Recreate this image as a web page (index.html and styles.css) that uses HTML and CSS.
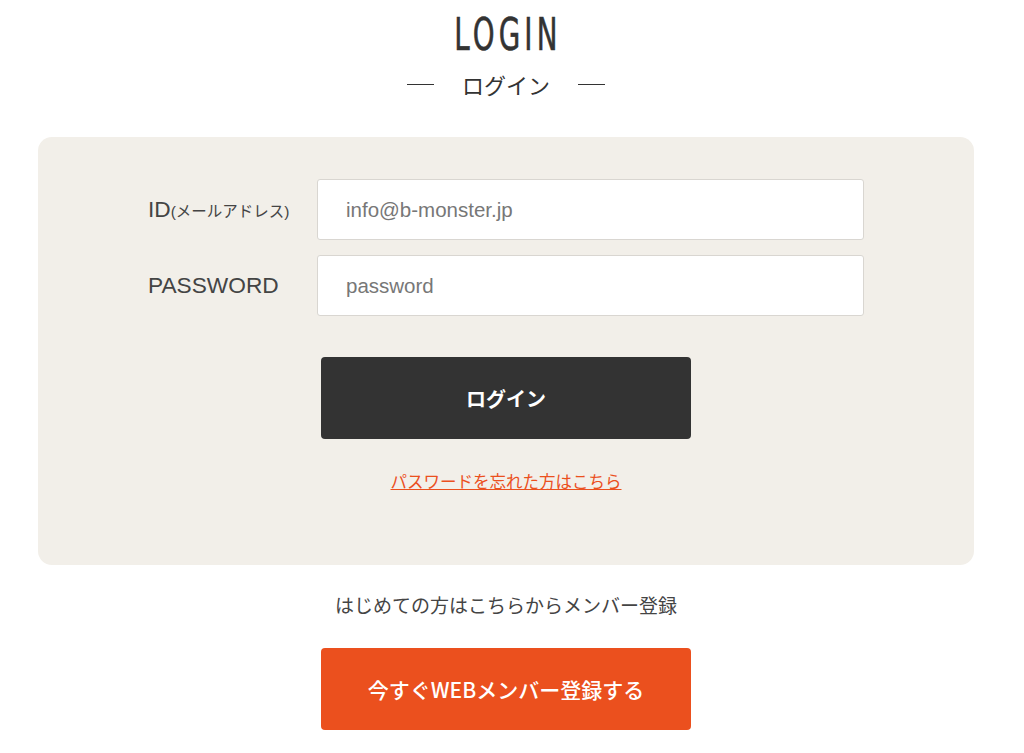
FILE: index.html
```html
<!DOCTYPE html>
<html lang="ja">
<head>
  <meta charset="UTF-8">
  <title>LOGIN</title>
  <link rel="stylesheet" href="styles.css">
</head>
<body>
  <div class="page">
    <div class="heading">
      <h1 class="title">LOGIN</h1>
      <p class="subtitle"><span class="dash"></span><span>ログイン</span><span class="dash"></span></p>
    </div>

    <form class="login-box" onsubmit="return false;">
      <div class="field">
        <label class="field-label" for="loginId">ID<small>(メールアドレス)</small></label>
        <input type="text" id="loginId" placeholder="info@b-monster.jp">
      </div>
      <div class="field">
        <label class="field-label" for="loginPass">PASSWORD</label>
        <input type="password" id="loginPass" placeholder="password">
      </div>

      <button type="submit" class="btn btn-dark">ログイン</button>

      <a href="#" class="forgot">パスワードを忘れた方はこちら</a>
    </form>

    <p class="first-time">はじめての方はこちらからメンバー登録</p>
    <a href="#" class="btn btn-orange">今すぐWEBメンバー登録する</a>
  </div>
</body>
</html>
```

FILE: styles.css
```css
body {
  margin: 0;
  background: #fff;
  color: #333;
  font-family: "Noto Sans CJK JP", "Noto Sans", sans-serif;
}

.page {
  width: 936px;
  margin-left: 38px;
  display: flex;
  flex-direction: column;
  align-items: center;
}

.heading {
  text-align: center;
  padding-top: 11px;
}

.title {
  margin: 0;
  font-family: "Liberation Sans Narrow", "DejaVu Sans Condensed", sans-serif;
  font-weight: normal;
  font-size: 44px;
  line-height: 48px;
  letter-spacing: 6px;
  text-indent: 6px;
  color: #333;
  display: inline-block;
  transform: scaleX(0.7);
  -webkit-text-stroke: 0.6px #333;
}

.subtitle {
  margin: 9px 0 0;
  display: flex;
  align-items: center;
  justify-content: center;
  gap: 28px;
  font-size: 22px;
  line-height: 32px;
  color: #333;
}

.dash {
  display: block;
  width: 27px;
  height: 1px;
  background: #333;
}

.login-box {
  box-sizing: border-box;
  width: 100%;
  margin-top: 37px;
  padding: 42px 110px 72px;
  background: #f2efe9;
  border-radius: 14px;
  display: flex;
  flex-direction: column;
  align-items: center;
}

.field {
  width: 100%;
  display: grid;
  grid-template-columns: 169px 1fr;
  align-items: center;
  margin-bottom: 15px;
}

.field-label {
  font-size: 22.7px;
  color: #444;
  font-family: "Liberation Sans", "Noto Sans CJK JP", sans-serif;
}

.field-label small {
  font-size: 15.5px;
}

.field input {
  box-sizing: border-box;
  width: 100%;
  height: 61px;
  padding: 0 28px;
  font-size: 20.5px;
  font-family: "Liberation Sans", sans-serif;
  border: 1px solid #d9d6d1;
  border-radius: 3px;
  background: #fff;
  color: #333;
}

.field input::placeholder {
  color: #777;
}

.field input:focus {
  outline: none;
  border-color: #aaa;
}

.btn {
  box-sizing: border-box;
  display: flex;
  align-items: center;
  justify-content: center;
  width: 370px;
  height: 82px;
  border: none;
  border-radius: 4px;
  font-family: "Noto Sans CJK JP", sans-serif;
  font-size: 20px;
  font-weight: bold;
  color: #fff;
  text-decoration: none;
  cursor: pointer;
}

.btn-dark {
  margin-top: 26px;
  background: #333;
}

.btn-orange {
  margin-top: 29px;
  background: #eb501e;
  font-size: 21px;
  font-weight: 500;
}

.forgot {
  margin-top: 30px;
  font-size: 16.5px;
  color: #eb501e;
  text-decoration: underline;
}

.first-time {
  margin: 26px 0 0;
  font-size: 19px;
  line-height: 28px;
  color: #444;
}
```
